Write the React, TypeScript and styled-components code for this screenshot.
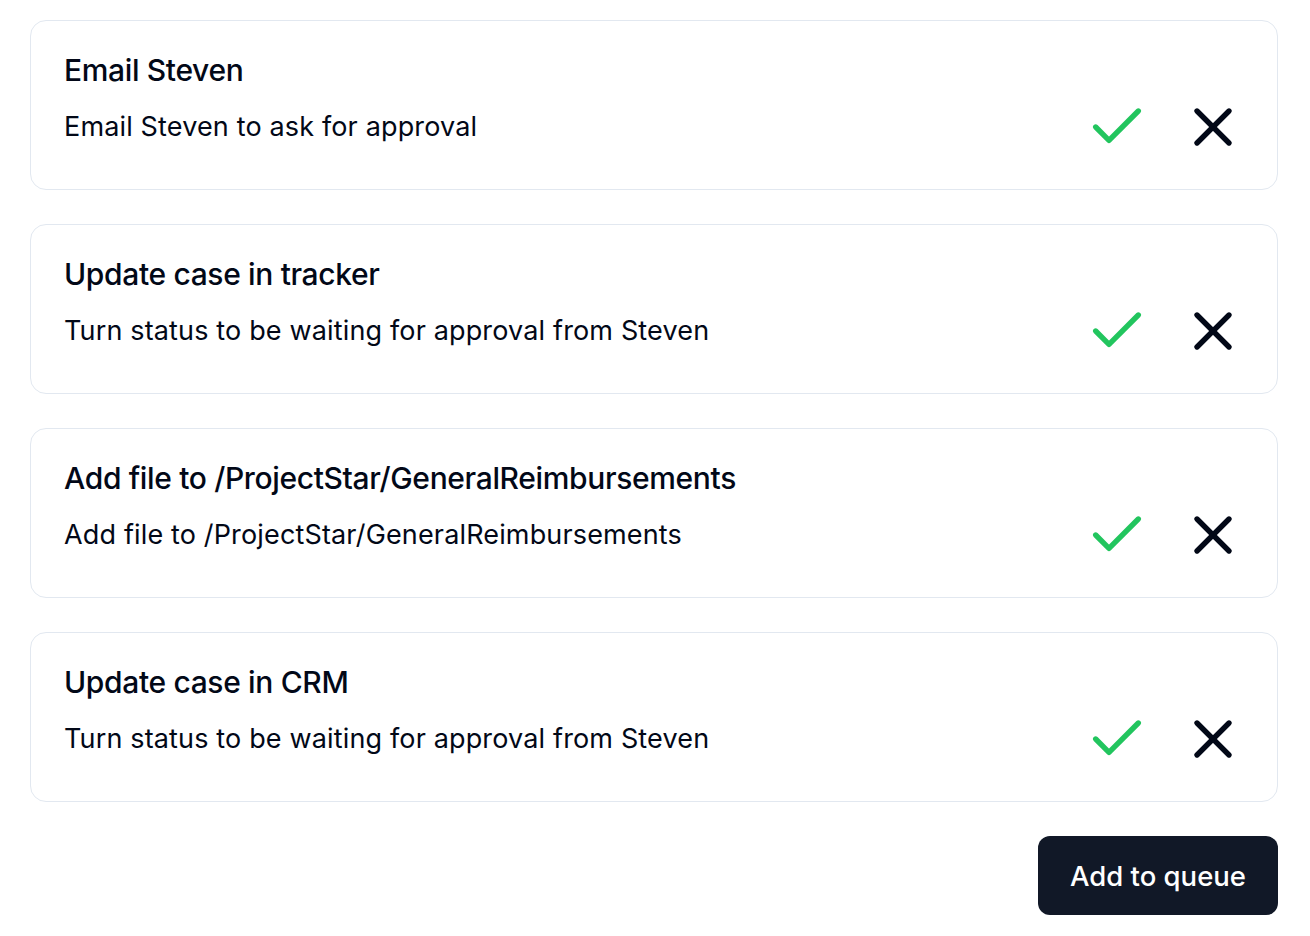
import React from "react";
import styled, { createGlobalStyle } from "styled-components";
import { Check, X } from "lucide-react";

const GlobalStyle = createGlobalStyle`
  * { box-sizing: border-box; }
  body {
    margin: 0;
    background: #ffffff;
    font-family: Inter, "Noto Sans", sans-serif;
    color: #020817;
  }
`;

const Page = styled.div`
  padding: 20px 32px 20px 30px;
  display: flex;
  flex-direction: column;
  gap: 34px;
`;

const Card = styled.div`
  border: 1.5px solid #e2e8f0;
  border-radius: 16px;
  padding: 31px 32px 30px 33px;
  display: flex;
  flex-direction: column;
  gap: 7px;
`;

const Title = styled.h3`
  margin: 0;
  font-size: 30px;
  font-weight: 550;
  line-height: 36px;
  letter-spacing: -0.35px;
`;

const Row = styled.div`
  display: flex;
  align-items: center;
  justify-content: space-between;
`;

const Description = styled.p`
  margin: 0;
  font-size: 27px;
  line-height: 36px;
  letter-spacing: 0.15px;
`;

const Actions = styled.div`
  display: flex;
  align-items: center;
  gap: 32px;
`;

const IconButton = styled.button<{ $tone: string }>`
  border: none;
  background: none;
  padding: 0;
  display: flex;
  cursor: pointer;
  color: ${(p) => p.$tone};
`;

const Footer = styled.div`
  display: flex;
  justify-content: flex-end;
`;

const QueueButton = styled.button`
  background: #111827;
  color: #ffffff;
  border: none;
  border-radius: 12px;
  height: 79px;
  padding: 0 32px;
  font-family: Inter, "Noto Sans", sans-serif;
  font-size: 27.5px;
  font-weight: 500;
  cursor: pointer;
`;

const tasks = [
  { title: "Email Steven", description: "Email Steven to ask for approval" },
  {
    title: "Update case in tracker",
    description: "Turn status to be waiting for approval from Steven",
  },
  {
    title: "Add file to /ProjectStar/GeneralReimbursements",
    description: "Add file to /ProjectStar/GeneralReimbursements",
  },
  {
    title: "Update case in CRM",
    description: "Turn status to be waiting for approval from Steven",
  },
];

export default function App() {
  return (
    <>
      <GlobalStyle />
      <Page>
        {tasks.map((t) => (
          <Card key={t.title}>
            <Title>{t.title}</Title>
            <Row>
              <Description>{t.description}</Description>
              <Actions>
                <IconButton $tone="#22c55e" aria-label="Approve">
                  <Check size={64} strokeWidth={2} />
                </IconButton>
                <IconButton $tone="#020817" aria-label="Reject">
                  <X size={64} strokeWidth={2} />
                </IconButton>
              </Actions>
            </Row>
          </Card>
        ))}
        <Footer>
          <QueueButton>Add to queue</QueueButton>
        </Footer>
      </Page>
    </>
  );
}
